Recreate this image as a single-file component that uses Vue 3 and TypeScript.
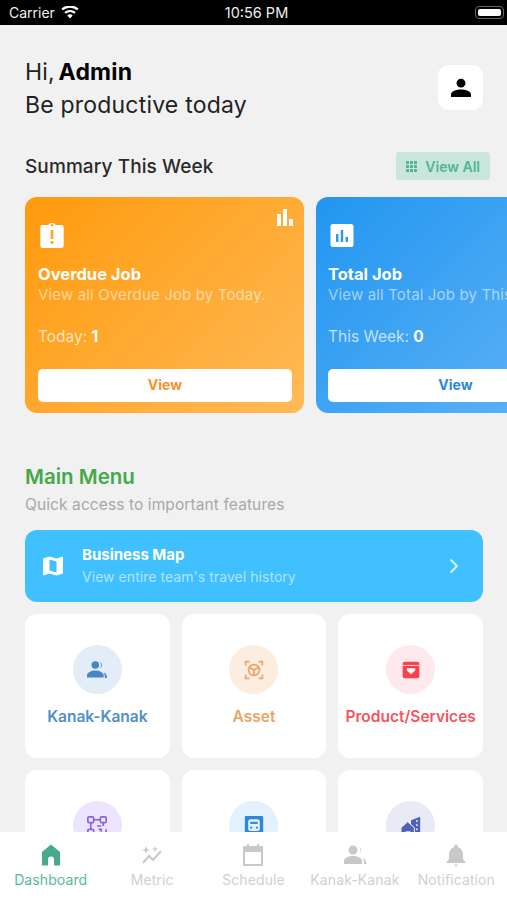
<template>
  <div class="screen">
    <header class="status-bar">
      <div class="status-left">
        <span>Carrier</span>
        <svg width="18" height="13" viewBox="0 0 18 13"><path d="M9 12.6 6.3 9.4a4.2 4.2 0 0 1 5.4 0zM4.8 7.7 3.3 6a8.8 8.8 0 0 1 11.4 0l-1.5 1.7a6.6 6.6 0 0 0-8.4 0zM1.9 4.3.4 2.6a13.4 13.4 0 0 1 17.2 0l-1.5 1.7a11.2 11.2 0 0 0-14.2 0z" fill="#fff"/></svg>
      </div>
      <span class="status-time">10:56 PM</span>
      <div class="status-battery"><i></i></div>
    </header>

    <main class="content">
      <section class="greeting">
        <div>
          <p class="hi name">Hi, <b>Admin</b></p>
          <p class="hi">Be productive today</p>
        </div>
        <div class="avatar">
          <svg width="22" height="22" viewBox="0 0 22 22"><circle cx="11" cy="6.2" r="4.4" fill="#000"/><path d="M1 20v-2.4C1 14.4 6.2 12.6 11 12.6s10 1.8 10 5V20z" fill="#000"/></svg>
        </div>
      </section>

      <section class="summary-head">
        <h2>Summary This Week</h2>
        <div class="view-all">
          <svg width="13" height="13" viewBox="0 0 13 13" fill="#4fb596"><rect v-for="d in dots" :key="d.k" :x="d.x" :y="d.y" width="3" height="3" rx=".6"/></svg>
          <span>View All</span>
        </div>
      </section>

      <section class="cards">
        <article class="card orange">
          <svg class="card-corner" width="18" height="18" viewBox="0 0 18 18" fill="#fff"><rect x="1" y="6" width="4" height="12"/><rect x="7" y="1" width="4" height="17"/><rect x="13" y="11" width="4" height="7"/></svg>
          <svg class="card-icon" width="24" height="26" viewBox="0 0 24 26"><path d="M2.500 3H8.200a4 3 0 0 1 7.600 0h5.700A2.200 2.200 0 0 1 23.700 5.200v18.600a2.200 2.200 0 0 1-2.200 2.200h-19A2.200 2.200 0 0 1 .3 23.800V5.200A2.200 2.200 0 0 1 2.500 3z" fill="#fff"/><rect x="10.600" y="8" width="2.800" height="9" fill="#ffa726"/><rect x="10.600" y="19" width="2.800" height="2.800" fill="#ffa726"/><circle cx="12" cy="3.300" r="1.200" fill="#ffa726"/></svg>
          <h3>Overdue Job</h3>
          <p class="card-desc">View all Overdue Job by Today.</p>
          <p class="card-count">Today: <b>1</b></p>
          <button class="card-btn">View</button>
        </article>
        <article class="card blue">
          <svg class="card-icon" width="24" height="26" viewBox="0 0 24 26"><rect x=".5" y="2" width="23" height="23" rx="2.500" fill="#fff"/><rect x="6" y="12" width="2.400" height="8" fill="#2f96ee"/><rect x="10.800" y="8" width="2.400" height="12" fill="#2f96ee"/><rect x="15.600" y="15" width="2.400" height="5" fill="#2f96ee"/></svg>
          <h3>Total Job</h3>
          <p class="card-desc">View all Total Job by This</p>
          <p class="card-count">This Week: <b>0</b></p>
          <button class="card-btn">View</button>
        </article>
      </section>

      <section class="menu-head">
        <h2>Main Menu</h2>
        <p>Quick access to important features</p>
      </section>

      <section class="map-banner">
        <svg width="22" height="22" viewBox="0 0 22 22"><path d="M1 3.500 7.500 1.500 14.500 3.500 21 1.500V18.500L14.500 20.500 7.500 18.500 1 20.500z" fill="#fff"/><path d="M7.500 4.500V15.500L14.500 17.500V6.500z" fill="#40c0ff"/></svg>
        <div class="map-text">
          <strong>Business Map</strong>
          <span>View entire team's travel history</span>
        </div>
        <svg class="map-arrow" width="10" height="16" viewBox="0 0 10 16"><path d="M1.500 1.500 8 8l-6.500 6.500" fill="none" stroke="#d4f0ff" stroke-width="2"/></svg>
      </section>

      <section class="menu-grid">
        <div v-for="item in menu" :key="item.id" class="menu-item">
          <div class="menu-circle" :style="{ background: item.bg }">
            <svg width="24" height="24" viewBox="0 0 24 24" v-html="item.icon"></svg>
          </div>
          <span v-if="item.label" :style="{ color: item.color }">{{ item.label }}</span>
        </div>
      </section>
    </main>

    <nav class="tabbar">
      <div v-for="tab in tabs" :key="tab.label" class="tab" :class="{ active: tab.active }">
        <svg width="24" height="24" viewBox="0 0 24 24" v-html="tab.icon"></svg>
        <span>{{ tab.label }}</span>
      </div>
    </nav>
  </div>
</template>

<script setup lang="ts">
interface MenuItem {
  id: string;
  label?: string;
  color?: string;
  bg: string;
  icon: string;
}

const dots = [1, 5, 9].flatMap((y) => [1, 5, 9].map((x) => ({ k: `${x}${y}`, x, y })));

// the second row is cut by the tab bar, its labels are out of view
const menu: MenuItem[] = [
  {
    id: 'kids',
    label: 'Kanak-Kanak',
    color: '#4f8fc9',
    bg: '#e3edf7',
    icon: '<g fill="#4585c2"><circle cx="10" cy="6" r="4.500"/><path d="M0 21v-2.500C0 15 5 12.500 10 12.500s10 2.500 10 6V21z"/><path d="M15.500 2a5 5 0 0 1 0 8.500 8 8 0 0 0 0-8.500zM20 15c2.500 1 4 3 4 6.500h-2.500c0-3-.5-4.500-1.500-6.500z"/></g>',
  },
  {
    id: 'asset',
    label: 'Asset',
    color: '#eaa366',
    bg: '#fbeee0',
    icon: '<g fill="none" stroke="#eaa366" stroke-width="2"><path d="M2 6.500V2h4.500M17.500 2H22v4.500M22 17.500V22h-4.500M6.500 22H2v-4.500"/><circle cx="12" cy="12" r="6.500"/><path d="M12 12V18M12 12 6.800 9M12 12l5.200-3"/></g>',
  },
  {
    id: 'product',
    label: 'Product/Services',
    color: '#f4545c',
    bg: '#ffe9ec',
    icon: '<rect x="2" y="2" width="20" height="20" rx="2.500" fill="#f9414c"/><path d="M2 6.500h20" stroke="#ffe9ec" stroke-width="1"/><path d="M7 10h10v2.500L12 17l-5-4.500z" fill="#fff"/>',
  },
  {
    id: 'qr',
    bg: '#ece4fd',
    icon: '<g fill="none" stroke="#8a63e0" stroke-width="2"><rect x="1" y="1" width="7" height="7" rx="1.500"/><rect x="16" y="1" width="7" height="7" rx="1.500"/><rect x="1" y="16" width="7" height="7" rx="1.500"/><path d="M8 4.500h8M4.500 8v8M19.500 8v4M12 12h5M14 16h3v3M23 16v7h-6"/></g>',
  },
  {
    id: 'vehicle',
    bg: '#e2f1fd',
    icon: '<rect x="1" y="0" width="22" height="24" rx="1.500" fill="#2f86e0"/><rect x="5" y="4" width="14" height="14" rx="3" fill="#e2f1fd"/><rect x="7.500" y="7" width="9" height="2.500" fill="#2f86e0"/><circle cx="8.500" cy="14" r="1.300" fill="#2f86e0"/><circle cx="15.500" cy="14" r="1.300" fill="#2f86e0"/>',
  },
  {
    id: 'property',
    bg: '#e8eaf6',
    icon: '<path d="M12 5 23 1V24H16V14L12 10z" fill="#5161b8"/><path d="M0 14 8 7l8 7V24H11V19H6V24H0z" fill="#5161b8" stroke="#e8eaf6" stroke-width="1.200"/><g fill="#e8eaf6"><rect x="18" y="5" width="2" height="2"/><rect x="18" y="10" width="2" height="2"/><rect x="18" y="15" width="2" height="2"/></g>',
  },
];

const grey = '#c8c8c8';
const tabs = [
  {
    label: 'Dashboard',
    active: true,
    icon: '<path d="M12 1.500 21 9v13.500h-6V16.500a3 3 0 0 0-6 0v6H3V9z" fill="#45ab8c"/>',
  },
  {
    label: 'Metric',
    active: false,
    icon: `<path d="M3 20 9 13l4 4 8-9" fill="none" stroke="${grey}" stroke-width="2"/><path d="M6 3 7 6l3 1-3 1-1 3-1-3-3-1 3-1zM15 3l.8 2.200L18 6l-2.200.8L15 9l-.8-2.200L12 6l2.200-.8z" fill="${grey}"/>`,
  },
  {
    label: 'Schedule',
    active: false,
    icon: `<path d="M3 3h3V1h2v2h8V1h2v2h3a1 1 0 0 1 1 1v18a1 1 0 0 1-1 1H3a1 1 0 0 1-1-1V4a1 1 0 0 1 1-1zm1 6v12h16V9z" fill="${grey}"/>`,
  },
  {
    label: 'Kanak-Kanak',
    active: false,
    icon: `<g fill="${grey}"><circle cx="10" cy="7" r="4.500"/><path d="M1 21v-3c0-3.500 5-5 9-5s9 1.500 9 5v3z"/><path d="M16 3a5 5 0 0 1 0 8 7 7 0 0 0 0-8zM20 15c2 1 3.500 3 3.500 6H21c0-2.500-.2-4-1-6z"/></g>`,
  },
  {
    label: 'Notification',
    active: false,
    icon: `<path d="M12 1.500a1.800 1.800 0 0 1 1.800 1.800v.7C17 5 19 7.800 19 11v5l2.500 3v1h-19v-1L5 16v-5c0-3.200 2-6 5.200-7v-.7A1.800 1.800 0 0 1 12 1.500zM10 21.500h4L12 23.500z" fill="${grey}"/>`,
  },
];
</script>

<style scoped>
.screen {
  display: flex;
  flex-direction: column;
  width: 507px;
  height: 900px;
  overflow: hidden;
  background: #f1f1f1;
  font-family: Inter, "Liberation Sans", sans-serif;
  color: #1c1c1c;
}

.status-bar {
  display: grid;
  grid-template-columns: 1fr auto 1fr;
  align-items: center;
  flex: 0 0 25px;
  padding: 0 3px 0 9px;
  background: #000;
  color: #eee;
  font-size: 14px;
}

.status-left {
  display: flex;
  align-items: center;
  gap: 6px;
}

.status-time {
  font-size: 14.500px;
}

.status-battery {
  justify-self: end;
  width: 29px;
  height: 13px;
  padding: 2px;
  border: 1px solid #666;
  border-radius: 4px;
  box-sizing: border-box;
}

.status-battery i {
  display: block;
  height: 100%;
  background: #fff;
  border-radius: 2px;
}

.content {
  flex: 1;
  min-height: 0;
  overflow: hidden;
  padding: 0 24px 0 25px;
}

.greeting {
  display: flex;
  justify-content: space-between;
  align-items: flex-start;
  padding-top: 31px;
}

.hi {
  margin: 0;
  font-size: 23px;
  line-height: 33px;
  letter-spacing: 0.2px;
  color: #222;
}

.hi.name {
  word-spacing: -3px;
}

.hi b {
  font-weight: 700;
  color: #000;
}

.avatar {
  display: flex;
  align-items: center;
  justify-content: center;
  width: 45px;
  height: 45px;
  margin-top: 9px;
  background: #fff;
  border-radius: 11px;
}

.summary-head {
  display: flex;
  justify-content: space-between;
  align-items: center;
  margin-top: 30px;
  margin-right: -7px;
}

.summary-head h2 {
  margin: 0;
  font-size: 19px;
  font-weight: 500;
  letter-spacing: 0.1px;
  color: #2a2a2a;
}

.view-all {
  display: flex;
  align-items: center;
  gap: 7px;
  height: 28px;
  padding: 0 10px 0 9px;
  background: #c9e6dc;
  border-radius: 3px;
  color: #4fb596;
  font-size: 14px;
  font-weight: 600;
}

.cards {
  display: flex;
  gap: 12px;
  margin-top: 17px;
  margin-right: -24px;
  overflow: hidden;
}

.card {
  position: relative;
  flex: 0 0 279px;
  height: 216px;
  box-sizing: border-box;
  padding: 25px 12px 11px 13px;
  border-radius: 12px;
  color: #fff;
}

.card.orange {
  background: linear-gradient(135deg, #ff9a0c, #ffba57);
}

.card.blue {
  padding-left: 12px;
  background: linear-gradient(135deg, #2196f0, #64b5f6);
}

.card-corner {
  position: absolute;
  top: 11px;
  right: 10px;
}

.card-icon {
  display: block;
  margin-left: 2px;
}

.card h3 {
  margin: 15px 0 0;
  font-size: 16.500px;
  line-height: 22px;
  font-weight: 700;
}

.card-desc {
  margin: 0;
  font-size: 15px;
  line-height: 19px;
  letter-spacing: 0.15px;
  white-space: nowrap;
  color: rgba(255, 255, 255, 0.55);
}

.card-count {
  margin: 22px 0 0;
  font-size: 15.500px;
  line-height: 22px;
  color: rgba(255, 255, 255, 0.7);
}

.card-count b {
  color: #fff;
  font-weight: 700;
}

.card-btn {
  display: block;
  width: 100%;
  height: 33px;
  margin-top: 21px;
  padding-bottom: 3px;
  border: none;
  border-radius: 5px;
  background: #fff;
  font-family: inherit;
  font-size: 14px;
  font-weight: 700;
}

.orange .card-btn {
  color: #f9922a;
}

.blue .card-btn {
  color: #2f86d8;
}

.menu-head {
  margin-top: 50px;
}

.menu-head h2 {
  margin: 0;
  font-size: 20.500px;
  line-height: 28px;
  font-weight: 600;
  color: #45a84a;
}

.menu-head p {
  margin: 3px 0 0;
  font-size: 15.500px;
  line-height: 22px;
  letter-spacing: 0.1px;
  color: #a8a8a8;
}

.map-banner {
  display: flex;
  align-items: center;
  gap: 18px;
  height: 72px;
  margin-top: 14px;
  padding: 0 24px 0 17px;
  background: #40c0ff;
  border-radius: 12px;
  box-sizing: border-box;
  color: #fff;
}

.map-text {
  display: flex;
  flex-direction: column;
  flex: 1;
  margin-top: -2px;
}

.map-text strong {
  font-size: 15px;
  line-height: 22px;
  font-weight: 700;
}

.map-text span {
  font-size: 14px;
  line-height: 21px;
  letter-spacing: 0.05px;
  color: rgba(255, 255, 255, 0.6);
}

.menu-grid {
  display: grid;
  grid-template-columns: repeat(3, 1fr);
  gap: 12px;
  margin-top: 12px;
}

.menu-item {
  display: flex;
  flex-direction: column;
  align-items: center;
  height: 144px;
  padding-top: 31px;
  box-sizing: border-box;
  background: #fff;
  border-radius: 12px;
}

.menu-circle {
  display: flex;
  align-items: center;
  justify-content: center;
  width: 49px;
  height: 49px;
  border-radius: 50%;
}

.menu-circle svg {
  width: 20px;
  height: 20px;
}

.menu-item span {
  margin-top: 13px;
  font-size: 15.500px;
  line-height: 20px;
  font-weight: 600;
  white-space: nowrap;
}

.tabbar {
  display: grid;
  grid-template-columns: repeat(5, 1fr);
  flex: 0 0 68px;
  background: #fff;
}

.tab {
  display: flex;
  flex-direction: column;
  align-items: center;
  padding-top: 11px;
  color: #d0d0d0;
  font-size: 14px;
  letter-spacing: 0.1px;
  white-space: nowrap;
}

.tab span {
  margin-top: 3px;
  line-height: 20px;
}

.tab.active {
  color: #57b99b;
}
</style>
